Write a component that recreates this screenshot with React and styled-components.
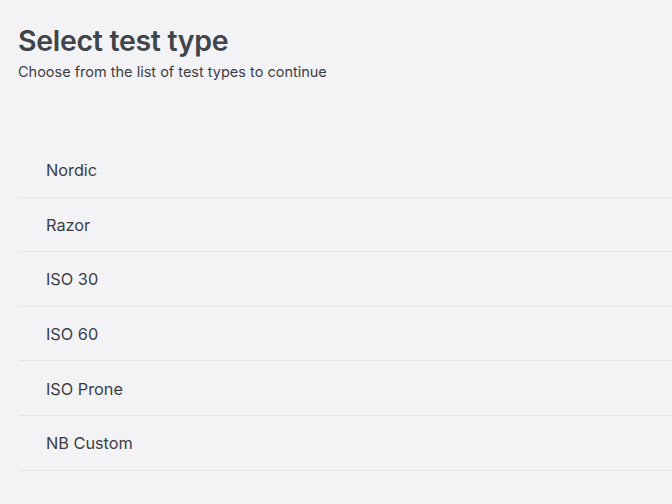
import React from "react";
import styled, { createGlobalStyle } from "styled-components";

const Global = createGlobalStyle`
  html, body { margin: 0; padding: 0; background: #f3f3f6; }
  body { font-family: Inter, "Noto Sans", sans-serif; -webkit-font-smoothing: antialiased; }
`;

const Page = styled.div`
  min-height: 504px;
  background: #f3f3f6;
  padding: 24px 0 0 18px;
  box-sizing: border-box;
`;

const Header = styled.header`
  display: flex;
  flex-direction: column;
  gap: 5px;
`;

const Title = styled.h1`
  margin: 0;
  font-size: 28.5px;
  line-height: 34px;
  font-weight: 600;
  letter-spacing: -0.3px;
  color: #40444b;
`;

const Subtitle = styled.p`
  margin: 0;
  font-size: 14.5px;
  line-height: 18px;
  color: #3c4047;
`;

const List = styled.ul`
  list-style: none;
  margin: 62px 0 0;
  padding: 0;
`;

const Row = styled.li`
  display: flex;
  align-items: center;
  height: 54.6px;
  padding: 1px 0 0 28px;
  box-sizing: border-box;
  border-bottom: 1px solid #e2e2e8;
  font-size: 16.3px;
  color: #3a3d43;
  cursor: pointer;
`;

const types = ["Nordic", "Razor", "ISO 30", "ISO 60", "ISO Prone", "NB Custom"];

export default function App() {
  return (
    <>
      <Global />
      <Page>
        <Header>
          <Title>Select test type</Title>
          <Subtitle>Choose from the list of test types to continue</Subtitle>
        </Header>
        <List>
          {types.map((t) => (
            <Row key={t}>{t}</Row>
          ))}
        </List>
      </Page>
    </>
  );
}
